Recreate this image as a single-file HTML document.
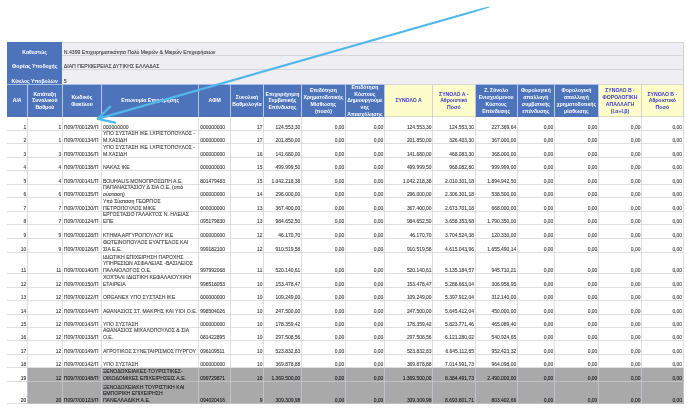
<!DOCTYPE html>
<html><head><meta charset="utf-8"><style>
html,body{margin:0;padding:0;background:#fff;}
body{width:687px;height:409px;overflow:hidden;position:relative;font-family:"Liberation Sans",sans-serif;}
#w{position:absolute;left:0;top:0;width:687px;height:409px;will-change:transform;background:#fff;}
.a{position:absolute;box-sizing:border-box;}
.c{position:absolute;box-sizing:border-box;display:flex;align-items:flex-end;overflow:visible;white-space:nowrap;font-size:5.15px;line-height:6.65px;color:#404040;-webkit-text-stroke:0.1px #404040;padding:0 1.1px 0 1.4px;}
.r{justify-content:flex-end;text-align:right;}
.n{font-size:4.95px;}
.h{position:absolute;box-sizing:border-box;display:flex;align-items:center;justify-content:center;text-align:center;overflow:hidden;white-space:nowrap;font-size:5.15px;line-height:6.75px;font-weight:bold;color:#fff;background:#4d74bb;}
.hy{background:#fdfdcc;color:#3838c0;}
.hl{position:absolute;height:1px;background:rgba(204,204,210,0.65);}
.vl{position:absolute;width:1px;background:rgba(205,205,220,0.65);}
</style></head><body><div id="w">

<div class="a" style="left:7px;top:42px;width:677.1px;height:42px;background:#efeef3;border-top:1px solid #d4d4d8;border-right:1px solid #d0d0d4;"></div>
<div class="a" style="left:7px;top:42px;width:55.4px;height:42px;background:#4d74bb;"></div>
<div class="h" style="left:7px;top:42.6px;width:55.4px;height:13.5px;align-items:flex-end;padding-bottom:0px;background:transparent">Καθεστώς</div>
<div class="c" style="left:62.4px;top:42.6px;width:620.7px;height:13.5px;padding-bottom:0px;color:#3a3a3a">Ν.4399 Επιχειρηματικότητα Πολύ Μικρών &amp; Μικρών Επιχειρήσεων</div>
<div class="hl" style="left:62.4px;top:55px;width:620.7px;background:#d6d6da"></div>
<div class="h" style="left:7px;top:56.1px;width:55.4px;height:14.0px;align-items:flex-end;padding-bottom:0px;background:transparent">Φορέας Υποδοχής</div>
<div class="c" style="left:62.4px;top:56.1px;width:620.7px;height:14.0px;padding-bottom:0px;color:#3a3a3a">ΔΙΑΠ ΠΕΡΙΦΕΡΕΙΑΣ ΔΥΤΙΚΗΣ ΕΛΛΑΔΑΣ</div>
<div class="hl" style="left:62.4px;top:69px;width:620.7px;background:#d6d6da"></div>
<div class="h" style="left:7px;top:70.1px;width:55.4px;height:14.5px;align-items:flex-end;padding-bottom:0px;background:transparent">Κύκλος Υποβολών</div>
<div class="c" style="left:62.4px;top:70.1px;width:620.7px;height:14.5px;padding-bottom:0px;color:#3a3a3a">5</div>
<div class="a" style="left:7px;top:84px;width:676.1px;height:33px;background:#4d74bb;"></div>
<div class="h" style="left:7px;top:85px;width:20.3px;height:32px;padding-bottom:0.5px">Α/Α</div>
<div class="h" style="left:27.3px;top:85px;width:35.099999999999994px;height:32px;padding-bottom:0.5px">Κατάταξη<br>Συναλικού<br>Βαθμού</div>
<div class="h" style="left:62.4px;top:85px;width:39.1px;height:32px;padding-bottom:0.5px">Κωδικός<br>Φακέλου</div>
<div class="h" style="left:101.5px;top:85px;width:97.30000000000001px;height:32px;padding-bottom:0.5px">Επωνυμία Επιχείρησης</div>
<div class="h" style="left:198.8px;top:85px;width:31.69999999999999px;height:32px;padding-bottom:0.5px">ΑΦΜ</div>
<div class="h" style="left:230.5px;top:85px;width:33.0px;height:32px;padding-bottom:0.5px">Συνολική<br>Βαθμολογία</div>
<div class="h" style="left:263.5px;top:85px;width:37.89999999999998px;height:32px;padding-bottom:0.5px">Επιχορήγηση<br>Συμβατικής<br>Επένδυσης</div>
<div class="h" style="left:301.4px;top:85px;width:44.0px;height:32px;padding-bottom:0.5px">Επιδότηση<br>Χρηματοδοτικής<br>Μίσθωσης<br>(ποσό)</div>
<div class="h" style="left:345.4px;top:85px;width:39.0px;height:32px;padding-bottom:0.5px">Επιδότηση<br>Κόστους<br>Δημιουργούμε<br>νης<br>Απασχόλησης</div>
<div class="h hy" style="left:384.4px;top:85px;width:48.30000000000001px;height:32px;padding-bottom:0.5px">ΣΥΝΟΛΟ Α</div>
<div class="h hy" style="left:432.7px;top:85px;width:42.30000000000001px;height:32px;padding-bottom:0.5px">ΣΥΝΟΛΟ Α -<br>Αθροιστικό<br>Ποσό</div>
<div class="h" style="left:475px;top:85px;width:42.299999999999955px;height:32px;padding-bottom:0.5px">Ζ. Σύνολο<br>Ενισχυόμενου<br>Κόστους<br>Επένδυσης</div>
<div class="h" style="left:517.3px;top:85px;width:37.10000000000002px;height:32px;padding-bottom:0.5px">Φορολογική<br>απαλλαγή<br>συμβατικής<br>επένδυσης</div>
<div class="h" style="left:554.4px;top:85px;width:44.0px;height:32px;padding-bottom:0.5px">Φορολογική<br>απαλλαγή<br>χρηματοδοτικής<br>μίσθωσης</div>
<div class="h hy" style="left:598.4px;top:85px;width:43.200000000000045px;height:32px;padding-bottom:0.5px">ΣΥΝΟΛΟ Β -<br>ΦΟΡΟΛΟΓΙΚΗ<br>ΑΠΑΛΛΑΓΗ<br>(I.α+I.β)</div>
<div class="h hy" style="left:641.6px;top:85px;width:41.5px;height:32px;padding-bottom:0.5px">ΣΥΝΟΛΟ Β -<br>Αθροιστικό<br>Ποσό</div>
<div class="hl" style="left:7px;top:84px;width:676.1px;background:#a6bce8"></div>
<div class="hl" style="left:384.4px;top:84px;width:90.60000000000002px;background:#d6d6d2"></div>
<div class="hl" style="left:598.4px;top:84px;width:84.70000000000005px;background:#d6d6d2"></div>
<div class="vl" style="left:26.8px;top:84px;height:33px;background:#b9c8e8"></div>
<div class="vl" style="left:61.9px;top:84px;height:33px;background:#b9c8e8"></div>
<div class="vl" style="left:101.0px;top:84px;height:33px;background:#b9c8e8"></div>
<div class="vl" style="left:198.3px;top:84px;height:33px;background:#b9c8e8"></div>
<div class="vl" style="left:230.0px;top:84px;height:33px;background:#b9c8e8"></div>
<div class="vl" style="left:263.0px;top:84px;height:33px;background:#b9c8e8"></div>
<div class="vl" style="left:300.9px;top:84px;height:33px;background:#b9c8e8"></div>
<div class="vl" style="left:344.9px;top:84px;height:33px;background:#b9c8e8"></div>
<div class="vl" style="left:383.9px;top:84px;height:33px;background:#b9c8e8"></div>
<div class="vl" style="left:432.2px;top:84px;height:33px;background:#d4d4c4"></div>
<div class="vl" style="left:474.5px;top:84px;height:33px;background:#b9c8e8"></div>
<div class="vl" style="left:516.8px;top:84px;height:33px;background:#b9c8e8"></div>
<div class="vl" style="left:553.9px;top:84px;height:33px;background:#b9c8e8"></div>
<div class="vl" style="left:597.9px;top:84px;height:33px;background:#b9c8e8"></div>
<div class="vl" style="left:641.1px;top:84px;height:33px;background:#d4d4c4"></div>
<div class="hl" style="left:7px;top:116px;width:676.1px;background:rgba(110,110,130,0.22)"></div>
<div class="vl" style="left:683px;top:84px;height:33px;background:#cfcfd2"></div>
<div class="a" style="left:27.3px;top:368px;width:656.3000000000001px;height:36px;background:#a9a9a9"></div>
<div class="hl" style="left:7px;top:130px;width:676.1px;"></div>
<div class="hl" style="left:7px;top:143px;width:676.1px;"></div>
<div class="hl" style="left:7px;top:157px;width:676.1px;"></div>
<div class="hl" style="left:7px;top:170px;width:676.1px;"></div>
<div class="hl" style="left:7px;top:184px;width:676.1px;"></div>
<div class="hl" style="left:7px;top:197px;width:676.1px;"></div>
<div class="hl" style="left:7px;top:211px;width:676.1px;"></div>
<div class="hl" style="left:7px;top:224px;width:676.1px;"></div>
<div class="hl" style="left:7px;top:238px;width:676.1px;"></div>
<div class="hl" style="left:7px;top:252px;width:676.1px;"></div>
<div class="hl" style="left:7px;top:273px;width:676.1px;"></div>
<div class="hl" style="left:7px;top:287px;width:676.1px;"></div>
<div class="hl" style="left:7px;top:300px;width:676.1px;"></div>
<div class="hl" style="left:7px;top:314px;width:676.1px;"></div>
<div class="hl" style="left:7px;top:327px;width:676.1px;"></div>
<div class="hl" style="left:7px;top:340px;width:676.1px;"></div>
<div class="hl" style="left:7px;top:354px;width:676.1px;"></div>
<div class="hl" style="left:7px;top:367px;width:676.1px;"></div>
<div class="hl" style="left:7px;top:381px;width:676.1px;"></div>
<div class="hl" style="left:7px;top:403px;width:676.1px;"></div>
<div class="vl" style="left:26.8px;top:117px;height:287px;"></div>
<div class="vl" style="left:61.9px;top:117px;height:287px;"></div>
<div class="vl" style="left:101.0px;top:117px;height:287px;"></div>
<div class="vl" style="left:198.3px;top:117px;height:287px;"></div>
<div class="vl" style="left:230.0px;top:117px;height:287px;"></div>
<div class="vl" style="left:263.0px;top:117px;height:287px;"></div>
<div class="vl" style="left:300.9px;top:117px;height:287px;"></div>
<div class="vl" style="left:344.9px;top:117px;height:287px;"></div>
<div class="vl" style="left:383.9px;top:117px;height:287px;"></div>
<div class="vl" style="left:432.2px;top:117px;height:287px;"></div>
<div class="vl" style="left:474.5px;top:117px;height:287px;"></div>
<div class="vl" style="left:516.8px;top:117px;height:287px;"></div>
<div class="vl" style="left:553.9px;top:117px;height:287px;"></div>
<div class="vl" style="left:597.9px;top:117px;height:287px;"></div>
<div class="vl" style="left:641.1px;top:117px;height:287px;"></div>
<div class="vl" style="left:682.6px;top:117px;height:287px;"></div>
<div class="c r n" style="left:7px;top:117px;width:20.3px;height:14.50px;">1</div>
<div class="c r n" style="left:27.3px;top:117px;width:35.099999999999994px;height:14.50px;">1</div>
<div class="c" style="left:62.4px;top:117px;width:39.1px;height:13.50px;">Π09/7/00129/Π</div>
<div class="c" style="left:101.5px;top:117px;width:97.30000000000001px;height:13.50px;">000000000</div>
<div class="c n" style="left:198.8px;top:117px;width:31.69999999999999px;height:14.50px;">000000000</div>
<div class="c r n" style="left:230.5px;top:117px;width:33.0px;height:14.50px;">17</div>
<div class="c r n" style="left:263.5px;top:117px;width:37.89999999999998px;height:14.50px;">124.553,30</div>
<div class="c r n" style="left:301.4px;top:117px;width:44.0px;height:14.50px;">0,00</div>
<div class="c r n" style="left:345.4px;top:117px;width:39.0px;height:14.50px;">0,00</div>
<div class="c r n" style="left:384.4px;top:117px;width:48.30000000000001px;height:14.50px;">124.553,30</div>
<div class="c r n" style="left:432.7px;top:117px;width:42.30000000000001px;height:14.50px;">124.553,30</div>
<div class="c r n" style="left:475px;top:117px;width:42.299999999999955px;height:14.50px;">227.369,64</div>
<div class="c r n" style="left:517.3px;top:117px;width:37.10000000000002px;height:14.50px;">0,00</div>
<div class="c r n" style="left:554.4px;top:117px;width:44.0px;height:14.50px;">0,00</div>
<div class="c r n" style="left:598.4px;top:117px;width:43.200000000000045px;height:14.50px;">0,00</div>
<div class="c r n" style="left:641.6px;top:117px;width:41.5px;height:14.50px;">0,00</div>
<div class="c r n" style="left:7px;top:131px;width:20.3px;height:13.50px;">2</div>
<div class="c r n" style="left:27.3px;top:131px;width:35.099999999999994px;height:13.50px;">1</div>
<div class="c" style="left:62.4px;top:131px;width:39.1px;height:12.50px;">Π09/7/00134/Π</div>
<div class="c" style="left:101.5px;top:131px;width:97.30000000000001px;height:12.50px;">ΥΠΟ ΣΥΣΤΑΣΗ ΙΚΕ Ι.ΧΡΙΣΤΟΠΟΥΛΟΣ -<br>Μ.ΧΑΣΙΔΗ</div>
<div class="c n" style="left:198.8px;top:131px;width:31.69999999999999px;height:13.50px;">000000000</div>
<div class="c r n" style="left:230.5px;top:131px;width:33.0px;height:13.50px;">17</div>
<div class="c r n" style="left:263.5px;top:131px;width:37.89999999999998px;height:13.50px;">201.850,00</div>
<div class="c r n" style="left:301.4px;top:131px;width:44.0px;height:13.50px;">0,00</div>
<div class="c r n" style="left:345.4px;top:131px;width:39.0px;height:13.50px;">0,00</div>
<div class="c r n" style="left:384.4px;top:131px;width:48.30000000000001px;height:13.50px;">201.850,00</div>
<div class="c r n" style="left:432.7px;top:131px;width:42.30000000000001px;height:13.50px;">326.403,30</div>
<div class="c r n" style="left:475px;top:131px;width:42.299999999999955px;height:13.50px;">367.000,00</div>
<div class="c r n" style="left:517.3px;top:131px;width:37.10000000000002px;height:13.50px;">0,00</div>
<div class="c r n" style="left:554.4px;top:131px;width:44.0px;height:13.50px;">0,00</div>
<div class="c r n" style="left:598.4px;top:131px;width:43.200000000000045px;height:13.50px;">0,00</div>
<div class="c r n" style="left:641.6px;top:131px;width:41.5px;height:13.50px;">0,00</div>
<div class="c r n" style="left:7px;top:144px;width:20.3px;height:14.50px;">3</div>
<div class="c r n" style="left:27.3px;top:144px;width:35.099999999999994px;height:14.50px;">3</div>
<div class="c" style="left:62.4px;top:144px;width:39.1px;height:13.50px;">Π09/7/00136/Π</div>
<div class="c" style="left:101.5px;top:144px;width:97.30000000000001px;height:13.50px;">ΥΠΟ ΣΥΣΤΑΣΗ ΙΚΕ Ι.ΧΡΙΣΤΟΠΟΥΛΟΣ -<br>Μ.ΧΑΣΙΔΗ</div>
<div class="c n" style="left:198.8px;top:144px;width:31.69999999999999px;height:14.50px;">000000000</div>
<div class="c r n" style="left:230.5px;top:144px;width:33.0px;height:14.50px;">16</div>
<div class="c r n" style="left:263.5px;top:144px;width:37.89999999999998px;height:14.50px;">141.680,00</div>
<div class="c r n" style="left:301.4px;top:144px;width:44.0px;height:14.50px;">0,00</div>
<div class="c r n" style="left:345.4px;top:144px;width:39.0px;height:14.50px;">0,00</div>
<div class="c r n" style="left:384.4px;top:144px;width:48.30000000000001px;height:14.50px;">141.680,00</div>
<div class="c r n" style="left:432.7px;top:144px;width:42.30000000000001px;height:14.50px;">468.083,30</div>
<div class="c r n" style="left:475px;top:144px;width:42.299999999999955px;height:14.50px;">368.000,00</div>
<div class="c r n" style="left:517.3px;top:144px;width:37.10000000000002px;height:14.50px;">0,00</div>
<div class="c r n" style="left:554.4px;top:144px;width:44.0px;height:14.50px;">0,00</div>
<div class="c r n" style="left:598.4px;top:144px;width:43.200000000000045px;height:14.50px;">0,00</div>
<div class="c r n" style="left:641.6px;top:144px;width:41.5px;height:14.50px;">0,00</div>
<div class="c r n" style="left:7px;top:158px;width:20.3px;height:13.50px;">4</div>
<div class="c r n" style="left:27.3px;top:158px;width:35.099999999999994px;height:13.50px;">4</div>
<div class="c" style="left:62.4px;top:158px;width:39.1px;height:12.50px;">Π09/7/00138/Π</div>
<div class="c" style="left:101.5px;top:158px;width:97.30000000000001px;height:12.50px;">ΝΑΚΑΣ ΙΚΕ</div>
<div class="c n" style="left:198.8px;top:158px;width:31.69999999999999px;height:13.50px;">000000000</div>
<div class="c r n" style="left:230.5px;top:158px;width:33.0px;height:13.50px;">15</div>
<div class="c r n" style="left:263.5px;top:158px;width:37.89999999999998px;height:13.50px;">499.999,50</div>
<div class="c r n" style="left:301.4px;top:158px;width:44.0px;height:13.50px;">0,00</div>
<div class="c r n" style="left:345.4px;top:158px;width:39.0px;height:13.50px;">0,00</div>
<div class="c r n" style="left:384.4px;top:158px;width:48.30000000000001px;height:13.50px;">499.999,50</div>
<div class="c r n" style="left:432.7px;top:158px;width:42.30000000000001px;height:13.50px;">968.082,80</div>
<div class="c r n" style="left:475px;top:158px;width:42.299999999999955px;height:13.50px;">999.999,00</div>
<div class="c r n" style="left:517.3px;top:158px;width:37.10000000000002px;height:13.50px;">0,00</div>
<div class="c r n" style="left:554.4px;top:158px;width:44.0px;height:13.50px;">0,00</div>
<div class="c r n" style="left:598.4px;top:158px;width:43.200000000000045px;height:13.50px;">0,00</div>
<div class="c r n" style="left:641.6px;top:158px;width:41.5px;height:13.50px;">0,00</div>
<div class="c r n" style="left:7px;top:171px;width:20.3px;height:14.50px;">5</div>
<div class="c r n" style="left:27.3px;top:171px;width:35.099999999999994px;height:14.50px;">4</div>
<div class="c" style="left:62.4px;top:171px;width:39.1px;height:13.50px;">Π09/7/00141/Π</div>
<div class="c" style="left:101.5px;top:171px;width:97.30000000000001px;height:13.50px;">BOUHALIS ΜΟΝΟΠΡΟΣΩΠΗ Α.Ε.</div>
<div class="c n" style="left:198.8px;top:171px;width:31.69999999999999px;height:14.50px;">801479483</div>
<div class="c r n" style="left:230.5px;top:171px;width:33.0px;height:14.50px;">15</div>
<div class="c r n" style="left:263.5px;top:171px;width:37.89999999999998px;height:14.50px;">1.042.218,38</div>
<div class="c r n" style="left:301.4px;top:171px;width:44.0px;height:14.50px;">0,00</div>
<div class="c r n" style="left:345.4px;top:171px;width:39.0px;height:14.50px;">0,00</div>
<div class="c r n" style="left:384.4px;top:171px;width:48.30000000000001px;height:14.50px;">1.042.218,38</div>
<div class="c r n" style="left:432.7px;top:171px;width:42.30000000000001px;height:14.50px;">2.010.301,18</div>
<div class="c r n" style="left:475px;top:171px;width:42.299999999999955px;height:14.50px;">1.894.942,50</div>
<div class="c r n" style="left:517.3px;top:171px;width:37.10000000000002px;height:14.50px;">0,00</div>
<div class="c r n" style="left:554.4px;top:171px;width:44.0px;height:14.50px;">0,00</div>
<div class="c r n" style="left:598.4px;top:171px;width:43.200000000000045px;height:14.50px;">0,00</div>
<div class="c r n" style="left:641.6px;top:171px;width:41.5px;height:14.50px;">0,00</div>
<div class="c r n" style="left:7px;top:185px;width:20.3px;height:13.50px;">6</div>
<div class="c r n" style="left:27.3px;top:185px;width:35.099999999999994px;height:13.50px;">6</div>
<div class="c" style="left:62.4px;top:185px;width:39.1px;height:12.50px;">Π09/7/00135/Π</div>
<div class="c" style="left:101.5px;top:185px;width:97.30000000000001px;height:12.50px;">ΠΑΠΑΝΑΣΤΑΣΙΟΥ Δ ΣΙΑ Ο.Ε. (υπό<br>σύσταση)</div>
<div class="c n" style="left:198.8px;top:185px;width:31.69999999999999px;height:13.50px;">000000000</div>
<div class="c r n" style="left:230.5px;top:185px;width:33.0px;height:13.50px;">14</div>
<div class="c r n" style="left:263.5px;top:185px;width:37.89999999999998px;height:13.50px;">296.000,00</div>
<div class="c r n" style="left:301.4px;top:185px;width:44.0px;height:13.50px;">0,00</div>
<div class="c r n" style="left:345.4px;top:185px;width:39.0px;height:13.50px;">0,00</div>
<div class="c r n" style="left:384.4px;top:185px;width:48.30000000000001px;height:13.50px;">296.000,00</div>
<div class="c r n" style="left:432.7px;top:185px;width:42.30000000000001px;height:13.50px;">2.306.301,18</div>
<div class="c r n" style="left:475px;top:185px;width:42.299999999999955px;height:13.50px;">538.500,00</div>
<div class="c r n" style="left:517.3px;top:185px;width:37.10000000000002px;height:13.50px;">0,00</div>
<div class="c r n" style="left:554.4px;top:185px;width:44.0px;height:13.50px;">0,00</div>
<div class="c r n" style="left:598.4px;top:185px;width:43.200000000000045px;height:13.50px;">0,00</div>
<div class="c r n" style="left:641.6px;top:185px;width:41.5px;height:13.50px;">0,00</div>
<div class="c r n" style="left:7px;top:198px;width:20.3px;height:14.50px;">7</div>
<div class="c r n" style="left:27.3px;top:198px;width:35.099999999999994px;height:14.50px;">7</div>
<div class="c" style="left:62.4px;top:198px;width:39.1px;height:13.50px;">Π09/7/00130/Π</div>
<div class="c" style="left:101.5px;top:198px;width:97.30000000000001px;height:13.50px;">Υπό Σύσταση ΓΕΩΡΓΙΟΣ<br>ΠΕΤΡΟΠΟΥΛΟΣ ΜΙΚΕ</div>
<div class="c n" style="left:198.8px;top:198px;width:31.69999999999999px;height:14.50px;">000000000</div>
<div class="c r n" style="left:230.5px;top:198px;width:33.0px;height:14.50px;">13</div>
<div class="c r n" style="left:263.5px;top:198px;width:37.89999999999998px;height:14.50px;">367.400,00</div>
<div class="c r n" style="left:301.4px;top:198px;width:44.0px;height:14.50px;">0,00</div>
<div class="c r n" style="left:345.4px;top:198px;width:39.0px;height:14.50px;">0,00</div>
<div class="c r n" style="left:384.4px;top:198px;width:48.30000000000001px;height:14.50px;">367.400,00</div>
<div class="c r n" style="left:432.7px;top:198px;width:42.30000000000001px;height:14.50px;">2.673.701,18</div>
<div class="c r n" style="left:475px;top:198px;width:42.299999999999955px;height:14.50px;">668.000,00</div>
<div class="c r n" style="left:517.3px;top:198px;width:37.10000000000002px;height:14.50px;">0,00</div>
<div class="c r n" style="left:554.4px;top:198px;width:44.0px;height:14.50px;">0,00</div>
<div class="c r n" style="left:598.4px;top:198px;width:43.200000000000045px;height:14.50px;">0,00</div>
<div class="c r n" style="left:641.6px;top:198px;width:41.5px;height:14.50px;">0,00</div>
<div class="c r n" style="left:7px;top:212px;width:20.3px;height:13.50px;">8</div>
<div class="c r n" style="left:27.3px;top:212px;width:35.099999999999994px;height:13.50px;">7</div>
<div class="c" style="left:62.4px;top:212px;width:39.1px;height:12.50px;">Π09/7/00124/Π</div>
<div class="c" style="left:101.5px;top:212px;width:97.30000000000001px;height:12.50px;">ΕΡΓΟΣΤΑΣΙΟ ΓΑΛΑΚΤΟΣ Ν. ΗΛΕΙΑΣ<br>ΕΠΕ</div>
<div class="c n" style="left:198.8px;top:212px;width:31.69999999999999px;height:13.50px;">095179830</div>
<div class="c r n" style="left:230.5px;top:212px;width:33.0px;height:13.50px;">13</div>
<div class="c r n" style="left:263.5px;top:212px;width:37.89999999999998px;height:13.50px;">984.652,50</div>
<div class="c r n" style="left:301.4px;top:212px;width:44.0px;height:13.50px;">0,00</div>
<div class="c r n" style="left:345.4px;top:212px;width:39.0px;height:13.50px;">0,00</div>
<div class="c r n" style="left:384.4px;top:212px;width:48.30000000000001px;height:13.50px;">984.652,50</div>
<div class="c r n" style="left:432.7px;top:212px;width:42.30000000000001px;height:13.50px;">3.658.353,68</div>
<div class="c r n" style="left:475px;top:212px;width:42.299999999999955px;height:13.50px;">1.790.350,00</div>
<div class="c r n" style="left:517.3px;top:212px;width:37.10000000000002px;height:13.50px;">0,00</div>
<div class="c r n" style="left:554.4px;top:212px;width:44.0px;height:13.50px;">0,00</div>
<div class="c r n" style="left:598.4px;top:212px;width:43.200000000000045px;height:13.50px;">0,00</div>
<div class="c r n" style="left:641.6px;top:212px;width:41.5px;height:13.50px;">0,00</div>
<div class="c r n" style="left:7px;top:225px;width:20.3px;height:14.50px;">9</div>
<div class="c r n" style="left:27.3px;top:225px;width:35.099999999999994px;height:14.50px;">9</div>
<div class="c" style="left:62.4px;top:225px;width:39.1px;height:13.50px;">Π09/7/00128/Π</div>
<div class="c" style="left:101.5px;top:225px;width:97.30000000000001px;height:13.50px;">ΚΤΗΜΑ ΑΡΓΥΡΟΠΟΥΛΟΥ ΙΚΕ</div>
<div class="c n" style="left:198.8px;top:225px;width:31.69999999999999px;height:14.50px;">000000000</div>
<div class="c r n" style="left:230.5px;top:225px;width:33.0px;height:14.50px;">12</div>
<div class="c r n" style="left:263.5px;top:225px;width:37.89999999999998px;height:14.50px;">46.170,70</div>
<div class="c r n" style="left:301.4px;top:225px;width:44.0px;height:14.50px;">0,00</div>
<div class="c r n" style="left:345.4px;top:225px;width:39.0px;height:14.50px;">0,00</div>
<div class="c r n" style="left:384.4px;top:225px;width:48.30000000000001px;height:14.50px;">46.170,70</div>
<div class="c r n" style="left:432.7px;top:225px;width:42.30000000000001px;height:14.50px;">3.704.524,38</div>
<div class="c r n" style="left:475px;top:225px;width:42.299999999999955px;height:14.50px;">120.330,00</div>
<div class="c r n" style="left:517.3px;top:225px;width:37.10000000000002px;height:14.50px;">0,00</div>
<div class="c r n" style="left:554.4px;top:225px;width:44.0px;height:14.50px;">0,00</div>
<div class="c r n" style="left:598.4px;top:225px;width:43.200000000000045px;height:14.50px;">0,00</div>
<div class="c r n" style="left:641.6px;top:225px;width:41.5px;height:14.50px;">0,00</div>
<div class="c r n" style="left:7px;top:239px;width:20.3px;height:14.50px;">10</div>
<div class="c r n" style="left:27.3px;top:239px;width:35.099999999999994px;height:14.50px;">9</div>
<div class="c" style="left:62.4px;top:239px;width:39.1px;height:13.50px;">Π09/7/00126/Π</div>
<div class="c" style="left:101.5px;top:239px;width:97.30000000000001px;height:13.50px;">ΦΩΤΕΙΝΟΠΟΥΛΟΣ ΕΥΑΓΓΕΛΟΣ ΚΑΙ<br>ΣΙΑ Ε.Ε.</div>
<div class="c n" style="left:198.8px;top:239px;width:31.69999999999999px;height:14.50px;">999182100</div>
<div class="c r n" style="left:230.5px;top:239px;width:33.0px;height:14.50px;">12</div>
<div class="c r n" style="left:263.5px;top:239px;width:37.89999999999998px;height:14.50px;">910.519,58</div>
<div class="c r n" style="left:301.4px;top:239px;width:44.0px;height:14.50px;">0,00</div>
<div class="c r n" style="left:345.4px;top:239px;width:39.0px;height:14.50px;">0,00</div>
<div class="c r n" style="left:384.4px;top:239px;width:48.30000000000001px;height:14.50px;">910.519,58</div>
<div class="c r n" style="left:432.7px;top:239px;width:42.30000000000001px;height:14.50px;">4.615.043,96</div>
<div class="c r n" style="left:475px;top:239px;width:42.299999999999955px;height:14.50px;">1.655.490,14</div>
<div class="c r n" style="left:517.3px;top:239px;width:37.10000000000002px;height:14.50px;">0,00</div>
<div class="c r n" style="left:554.4px;top:239px;width:44.0px;height:14.50px;">0,00</div>
<div class="c r n" style="left:598.4px;top:239px;width:43.200000000000045px;height:14.50px;">0,00</div>
<div class="c r n" style="left:641.6px;top:239px;width:41.5px;height:14.50px;">0,00</div>
<div class="c r n" style="left:7px;top:253px;width:20.3px;height:21.50px;">11</div>
<div class="c r n" style="left:27.3px;top:253px;width:35.099999999999994px;height:21.50px;">11</div>
<div class="c" style="left:62.4px;top:253px;width:39.1px;height:20.50px;">Π09/7/00140/Π</div>
<div class="c" style="left:101.5px;top:253px;width:97.30000000000001px;height:20.50px;">ΙΔΙΩΤΙΚΗ ΕΠΙΧΕΙΡΗΣΗ ΠΑΡΟΧΗΣ<br>ΥΠΗΡΕΣΙΩΝ ΑΣΦΑΛΕΙΑΣ -ΒΑΣΙΛΕΙΟΣ<br>ΠΑΛΑΙΟΛΟΓΟΣ Ο.Ε.</div>
<div class="c n" style="left:198.8px;top:253px;width:31.69999999999999px;height:21.50px;">997992068</div>
<div class="c r n" style="left:230.5px;top:253px;width:33.0px;height:21.50px;">11</div>
<div class="c r n" style="left:263.5px;top:253px;width:37.89999999999998px;height:21.50px;">520.140,61</div>
<div class="c r n" style="left:301.4px;top:253px;width:44.0px;height:21.50px;">0,00</div>
<div class="c r n" style="left:345.4px;top:253px;width:39.0px;height:21.50px;">0,00</div>
<div class="c r n" style="left:384.4px;top:253px;width:48.30000000000001px;height:21.50px;">520.140,61</div>
<div class="c r n" style="left:432.7px;top:253px;width:42.30000000000001px;height:21.50px;">5.135.184,57</div>
<div class="c r n" style="left:475px;top:253px;width:42.299999999999955px;height:21.50px;">945.710,21</div>
<div class="c r n" style="left:517.3px;top:253px;width:37.10000000000002px;height:21.50px;">0,00</div>
<div class="c r n" style="left:554.4px;top:253px;width:44.0px;height:21.50px;">0,00</div>
<div class="c r n" style="left:598.4px;top:253px;width:43.200000000000045px;height:21.50px;">0,00</div>
<div class="c r n" style="left:641.6px;top:253px;width:41.5px;height:21.50px;">0,00</div>
<div class="c r n" style="left:7px;top:274px;width:20.3px;height:14.50px;">12</div>
<div class="c r n" style="left:27.3px;top:274px;width:35.099999999999994px;height:14.50px;">12</div>
<div class="c" style="left:62.4px;top:274px;width:39.1px;height:13.50px;">Π09/7/00150/Π</div>
<div class="c" style="left:101.5px;top:274px;width:97.30000000000001px;height:13.50px;">ΧΟΧΤΑΛΙ ΙΔΙΩΤΙΚΗ ΚΕΦΑΛΑΙΟΥΧΙΚΗ<br>ΕΤΑΙΡΕΙΑ</div>
<div class="c n" style="left:198.8px;top:274px;width:31.69999999999999px;height:14.50px;">998518053</div>
<div class="c r n" style="left:230.5px;top:274px;width:33.0px;height:14.50px;">10</div>
<div class="c r n" style="left:263.5px;top:274px;width:37.89999999999998px;height:14.50px;">153.478,47</div>
<div class="c r n" style="left:301.4px;top:274px;width:44.0px;height:14.50px;">0,00</div>
<div class="c r n" style="left:345.4px;top:274px;width:39.0px;height:14.50px;">0,00</div>
<div class="c r n" style="left:384.4px;top:274px;width:48.30000000000001px;height:14.50px;">153.478,47</div>
<div class="c r n" style="left:432.7px;top:274px;width:42.30000000000001px;height:14.50px;">5.288.663,04</div>
<div class="c r n" style="left:475px;top:274px;width:42.299999999999955px;height:14.50px;">306.958,95</div>
<div class="c r n" style="left:517.3px;top:274px;width:37.10000000000002px;height:14.50px;">0,00</div>
<div class="c r n" style="left:554.4px;top:274px;width:44.0px;height:14.50px;">0,00</div>
<div class="c r n" style="left:598.4px;top:274px;width:43.200000000000045px;height:14.50px;">0,00</div>
<div class="c r n" style="left:641.6px;top:274px;width:41.5px;height:14.50px;">0,00</div>
<div class="c r n" style="left:7px;top:288px;width:20.3px;height:13.50px;">13</div>
<div class="c r n" style="left:27.3px;top:288px;width:35.099999999999994px;height:13.50px;">12</div>
<div class="c" style="left:62.4px;top:288px;width:39.1px;height:12.50px;">Π09/7/00122/Π</div>
<div class="c" style="left:101.5px;top:288px;width:97.30000000000001px;height:12.50px;">ORGANEX ΥΠΟ ΣΥΣΤΑΣΗ ΙΚΕ</div>
<div class="c n" style="left:198.8px;top:288px;width:31.69999999999999px;height:13.50px;">000000000</div>
<div class="c r n" style="left:230.5px;top:288px;width:33.0px;height:13.50px;">10</div>
<div class="c r n" style="left:263.5px;top:288px;width:37.89999999999998px;height:13.50px;">109.249,00</div>
<div class="c r n" style="left:301.4px;top:288px;width:44.0px;height:13.50px;">0,00</div>
<div class="c r n" style="left:345.4px;top:288px;width:39.0px;height:13.50px;">0,00</div>
<div class="c r n" style="left:384.4px;top:288px;width:48.30000000000001px;height:13.50px;">109.249,00</div>
<div class="c r n" style="left:432.7px;top:288px;width:42.30000000000001px;height:13.50px;">5.397.912,04</div>
<div class="c r n" style="left:475px;top:288px;width:42.299999999999955px;height:13.50px;">312.140,00</div>
<div class="c r n" style="left:517.3px;top:288px;width:37.10000000000002px;height:13.50px;">0,00</div>
<div class="c r n" style="left:554.4px;top:288px;width:44.0px;height:13.50px;">0,00</div>
<div class="c r n" style="left:598.4px;top:288px;width:43.200000000000045px;height:13.50px;">0,00</div>
<div class="c r n" style="left:641.6px;top:288px;width:41.5px;height:13.50px;">0,00</div>
<div class="c r n" style="left:7px;top:301px;width:20.3px;height:14.50px;">14</div>
<div class="c r n" style="left:27.3px;top:301px;width:35.099999999999994px;height:14.50px;">12</div>
<div class="c" style="left:62.4px;top:301px;width:39.1px;height:13.50px;">Π09/7/00144/Π</div>
<div class="c" style="left:101.5px;top:301px;width:97.30000000000001px;height:13.50px;">ΑΘΑΝΑΣΙΟΣ ΣΤ. ΜΑΚΡΗΣ ΚΑΙ ΥΙΟΙ Ο.Ε.</div>
<div class="c n" style="left:198.8px;top:301px;width:31.69999999999999px;height:14.50px;">998504026</div>
<div class="c r n" style="left:230.5px;top:301px;width:33.0px;height:14.50px;">10</div>
<div class="c r n" style="left:263.5px;top:301px;width:37.89999999999998px;height:14.50px;">247.500,00</div>
<div class="c r n" style="left:301.4px;top:301px;width:44.0px;height:14.50px;">0,00</div>
<div class="c r n" style="left:345.4px;top:301px;width:39.0px;height:14.50px;">0,00</div>
<div class="c r n" style="left:384.4px;top:301px;width:48.30000000000001px;height:14.50px;">247.500,00</div>
<div class="c r n" style="left:432.7px;top:301px;width:42.30000000000001px;height:14.50px;">5.645.412,04</div>
<div class="c r n" style="left:475px;top:301px;width:42.299999999999955px;height:14.50px;">450.000,00</div>
<div class="c r n" style="left:517.3px;top:301px;width:37.10000000000002px;height:14.50px;">0,00</div>
<div class="c r n" style="left:554.4px;top:301px;width:44.0px;height:14.50px;">0,00</div>
<div class="c r n" style="left:598.4px;top:301px;width:43.200000000000045px;height:14.50px;">0,00</div>
<div class="c r n" style="left:641.6px;top:301px;width:41.5px;height:14.50px;">0,00</div>
<div class="c r n" style="left:7px;top:315px;width:20.3px;height:13.50px;">15</div>
<div class="c r n" style="left:27.3px;top:315px;width:35.099999999999994px;height:13.50px;">12</div>
<div class="c" style="left:62.4px;top:315px;width:39.1px;height:12.50px;">Π09/7/00143/Π</div>
<div class="c" style="left:101.5px;top:315px;width:97.30000000000001px;height:12.50px;">ΥΠΟ ΣΥΣΤΑΣΗ</div>
<div class="c n" style="left:198.8px;top:315px;width:31.69999999999999px;height:13.50px;">000000000</div>
<div class="c r n" style="left:230.5px;top:315px;width:33.0px;height:13.50px;">10</div>
<div class="c r n" style="left:263.5px;top:315px;width:37.89999999999998px;height:13.50px;">178.359,42</div>
<div class="c r n" style="left:301.4px;top:315px;width:44.0px;height:13.50px;">0,00</div>
<div class="c r n" style="left:345.4px;top:315px;width:39.0px;height:13.50px;">0,00</div>
<div class="c r n" style="left:384.4px;top:315px;width:48.30000000000001px;height:13.50px;">178.359,42</div>
<div class="c r n" style="left:432.7px;top:315px;width:42.30000000000001px;height:13.50px;">5.823.771,46</div>
<div class="c r n" style="left:475px;top:315px;width:42.299999999999955px;height:13.50px;">465.089,40</div>
<div class="c r n" style="left:517.3px;top:315px;width:37.10000000000002px;height:13.50px;">0,00</div>
<div class="c r n" style="left:554.4px;top:315px;width:44.0px;height:13.50px;">0,00</div>
<div class="c r n" style="left:598.4px;top:315px;width:43.200000000000045px;height:13.50px;">0,00</div>
<div class="c r n" style="left:641.6px;top:315px;width:41.5px;height:13.50px;">0,00</div>
<div class="c r n" style="left:7px;top:328px;width:20.3px;height:13.50px;">16</div>
<div class="c r n" style="left:27.3px;top:328px;width:35.099999999999994px;height:13.50px;">12</div>
<div class="c" style="left:62.4px;top:328px;width:39.1px;height:12.50px;">Π09/7/00133/Π</div>
<div class="c" style="left:101.5px;top:328px;width:97.30000000000001px;height:12.50px;">ΑΘΑΝΑΣΙΟΣ ΜΙΧΑΛΟΠΟΥΛΟΣ &amp; ΣΙΑ<br>Ο.Ε.</div>
<div class="c n" style="left:198.8px;top:328px;width:31.69999999999999px;height:13.50px;">081422895</div>
<div class="c r n" style="left:230.5px;top:328px;width:33.0px;height:13.50px;">10</div>
<div class="c r n" style="left:263.5px;top:328px;width:37.89999999999998px;height:13.50px;">297.508,56</div>
<div class="c r n" style="left:301.4px;top:328px;width:44.0px;height:13.50px;">0,00</div>
<div class="c r n" style="left:345.4px;top:328px;width:39.0px;height:13.50px;">0,00</div>
<div class="c r n" style="left:384.4px;top:328px;width:48.30000000000001px;height:13.50px;">297.508,56</div>
<div class="c r n" style="left:432.7px;top:328px;width:42.30000000000001px;height:13.50px;">6.121.280,02</div>
<div class="c r n" style="left:475px;top:328px;width:42.299999999999955px;height:13.50px;">540.924,65</div>
<div class="c r n" style="left:517.3px;top:328px;width:37.10000000000002px;height:13.50px;">0,00</div>
<div class="c r n" style="left:554.4px;top:328px;width:44.0px;height:13.50px;">0,00</div>
<div class="c r n" style="left:598.4px;top:328px;width:43.200000000000045px;height:13.50px;">0,00</div>
<div class="c r n" style="left:641.6px;top:328px;width:41.5px;height:13.50px;">0,00</div>
<div class="c r n" style="left:7px;top:341px;width:20.3px;height:14.50px;">17</div>
<div class="c r n" style="left:27.3px;top:341px;width:35.099999999999994px;height:14.50px;">12</div>
<div class="c" style="left:62.4px;top:341px;width:39.1px;height:13.50px;">Π09/7/00149/Π</div>
<div class="c" style="left:101.5px;top:341px;width:97.30000000000001px;height:13.50px;">ΑΓΡΟΤΙΚΟΣ ΣΥΝΕΤΑΙΡΙΣΜΟΣ ΠΥΡΓΟΥ</div>
<div class="c n" style="left:198.8px;top:341px;width:31.69999999999999px;height:14.50px;">096109511</div>
<div class="c r n" style="left:230.5px;top:341px;width:33.0px;height:14.50px;">10</div>
<div class="c r n" style="left:263.5px;top:341px;width:37.89999999999998px;height:14.50px;">523.832,83</div>
<div class="c r n" style="left:301.4px;top:341px;width:44.0px;height:14.50px;">0,00</div>
<div class="c r n" style="left:345.4px;top:341px;width:39.0px;height:14.50px;">0,00</div>
<div class="c r n" style="left:384.4px;top:341px;width:48.30000000000001px;height:14.50px;">523.832,83</div>
<div class="c r n" style="left:432.7px;top:341px;width:42.30000000000001px;height:14.50px;">6.645.112,85</div>
<div class="c r n" style="left:475px;top:341px;width:42.299999999999955px;height:14.50px;">952.423,32</div>
<div class="c r n" style="left:517.3px;top:341px;width:37.10000000000002px;height:14.50px;">0,00</div>
<div class="c r n" style="left:554.4px;top:341px;width:44.0px;height:14.50px;">0,00</div>
<div class="c r n" style="left:598.4px;top:341px;width:43.200000000000045px;height:14.50px;">0,00</div>
<div class="c r n" style="left:641.6px;top:341px;width:41.5px;height:14.50px;">0,00</div>
<div class="c r n" style="left:7px;top:355px;width:20.3px;height:13.50px;">18</div>
<div class="c r n" style="left:27.3px;top:355px;width:35.099999999999994px;height:13.50px;">12</div>
<div class="c" style="left:62.4px;top:355px;width:39.1px;height:12.50px;">Π09/7/00142/Π</div>
<div class="c" style="left:101.5px;top:355px;width:97.30000000000001px;height:12.50px;">ΥΠΟ ΣΥΣΤΑΣΗ</div>
<div class="c n" style="left:198.8px;top:355px;width:31.69999999999999px;height:13.50px;">000000000</div>
<div class="c r n" style="left:230.5px;top:355px;width:33.0px;height:13.50px;">10</div>
<div class="c r n" style="left:263.5px;top:355px;width:37.89999999999998px;height:13.50px;">369.878,88</div>
<div class="c r n" style="left:301.4px;top:355px;width:44.0px;height:13.50px;">0,00</div>
<div class="c r n" style="left:345.4px;top:355px;width:39.0px;height:13.50px;">0,00</div>
<div class="c r n" style="left:384.4px;top:355px;width:48.30000000000001px;height:13.50px;">369.878,88</div>
<div class="c r n" style="left:432.7px;top:355px;width:42.30000000000001px;height:13.50px;">7.014.991,73</div>
<div class="c r n" style="left:475px;top:355px;width:42.299999999999955px;height:13.50px;">964.098,00</div>
<div class="c r n" style="left:517.3px;top:355px;width:37.10000000000002px;height:13.50px;">0,00</div>
<div class="c r n" style="left:554.4px;top:355px;width:44.0px;height:13.50px;">0,00</div>
<div class="c r n" style="left:598.4px;top:355px;width:43.200000000000045px;height:13.50px;">0,00</div>
<div class="c r n" style="left:641.6px;top:355px;width:41.5px;height:13.50px;">0,00</div>
<div class="c r n" style="left:7px;top:368px;width:20.3px;height:14.50px;color:#111;">19</div>
<div class="c r n" style="left:27.3px;top:368px;width:35.099999999999994px;height:14.50px;color:#111;">12</div>
<div class="c" style="left:62.4px;top:368px;width:39.1px;height:13.50px;color:#111;">Π09/7/00148/Π</div>
<div class="c" style="left:101.5px;top:368px;width:97.30000000000001px;height:13.50px;color:#111;">ΞΕΝΟΔΟΧΕΙΑΚΕΣ-ΤΟΥΡΙΣΤΙΚΕΣ-<br>ΟΙΚΟΔΟΜΙΚΕΣ ΕΠΙΧΕΙΡΗΣΕΙΣ Α.Ε.</div>
<div class="c n" style="left:198.8px;top:368px;width:31.69999999999999px;height:14.50px;color:#111;">099729871</div>
<div class="c r n" style="left:230.5px;top:368px;width:33.0px;height:14.50px;color:#111;">10</div>
<div class="c r n" style="left:263.5px;top:368px;width:37.89999999999998px;height:14.50px;color:#111;">1.369.500,00</div>
<div class="c r n" style="left:301.4px;top:368px;width:44.0px;height:14.50px;color:#111;">0,00</div>
<div class="c r n" style="left:345.4px;top:368px;width:39.0px;height:14.50px;color:#111;">0,00</div>
<div class="c r n" style="left:384.4px;top:368px;width:48.30000000000001px;height:14.50px;color:#111;">1.369.500,00</div>
<div class="c r n" style="left:432.7px;top:368px;width:42.30000000000001px;height:14.50px;color:#111;">8.384.491,73</div>
<div class="c r n" style="left:475px;top:368px;width:42.299999999999955px;height:14.50px;color:#111;">2.490.000,00</div>
<div class="c r n" style="left:517.3px;top:368px;width:37.10000000000002px;height:14.50px;color:#111;">0,00</div>
<div class="c r n" style="left:554.4px;top:368px;width:44.0px;height:14.50px;color:#111;">0,00</div>
<div class="c r n" style="left:598.4px;top:368px;width:43.200000000000045px;height:14.50px;color:#111;">0,00</div>
<div class="c r n" style="left:641.6px;top:368px;width:41.5px;height:14.50px;color:#111;">0,00</div>
<div class="c r n" style="left:7px;top:382px;width:20.3px;height:22.50px;color:#111;">20</div>
<div class="c r n" style="left:27.3px;top:382px;width:35.099999999999994px;height:22.50px;color:#111;">20</div>
<div class="c" style="left:62.4px;top:382px;width:39.1px;height:21.50px;color:#111;">Π09/7/00123/Π</div>
<div class="c" style="left:101.5px;top:382px;width:97.30000000000001px;height:21.50px;color:#111;">ΞΕΝΟΔΟΧΕΙΑΚΗ ΤΟΥΡΙΣΤΙΚΗ ΚΑΙ<br>ΕΜΠΟΡΙΚΗ ΕΠΙΧΕΙΡΗΣΗ<br>ΠΑΝΕΛΛΑΔΙΚΗ Α.Ε.</div>
<div class="c n" style="left:198.8px;top:382px;width:31.69999999999999px;height:22.50px;color:#111;">094020416</div>
<div class="c r n" style="left:230.5px;top:382px;width:33.0px;height:22.50px;color:#111;">9</div>
<div class="c r n" style="left:263.5px;top:382px;width:37.89999999999998px;height:22.50px;color:#111;">309.309,98</div>
<div class="c r n" style="left:301.4px;top:382px;width:44.0px;height:22.50px;color:#111;">0,00</div>
<div class="c r n" style="left:345.4px;top:382px;width:39.0px;height:22.50px;color:#111;">0,00</div>
<div class="c r n" style="left:384.4px;top:382px;width:48.30000000000001px;height:22.50px;color:#111;">309.309,98</div>
<div class="c r n" style="left:432.7px;top:382px;width:42.30000000000001px;height:22.50px;color:#111;">8.693.801,71</div>
<div class="c r n" style="left:475px;top:382px;width:42.299999999999955px;height:22.50px;color:#111;">803.402,66</div>
<div class="c r n" style="left:517.3px;top:382px;width:37.10000000000002px;height:22.50px;color:#111;">0,00</div>
<div class="c r n" style="left:554.4px;top:382px;width:44.0px;height:22.50px;color:#111;">0,00</div>
<div class="c r n" style="left:598.4px;top:382px;width:43.200000000000045px;height:22.50px;color:#111;">0,00</div>
<div class="c r n" style="left:641.6px;top:382px;width:41.5px;height:22.50px;color:#111;">0,00</div>
<svg class="a" style="left:0;top:0" width="687" height="409" viewBox="0 0 687 409">
<polygon points="97.92,119.91 470.30,13.55 483.94,9.35 489.72,7.33 489.48,6.47 483.50,7.81 469.70,11.44 97.28,117.69" fill="#4fb8e8"/>
<g stroke="#4fb8e8" stroke-width="2.3" stroke-linecap="butt" stroke-linejoin="miter" fill="none">
<path d="M110.8,106 L97.2,119.4"/><path d="M97.0,118.7 L115.8,122.9"/>
</g></svg>
</div></body></html>
